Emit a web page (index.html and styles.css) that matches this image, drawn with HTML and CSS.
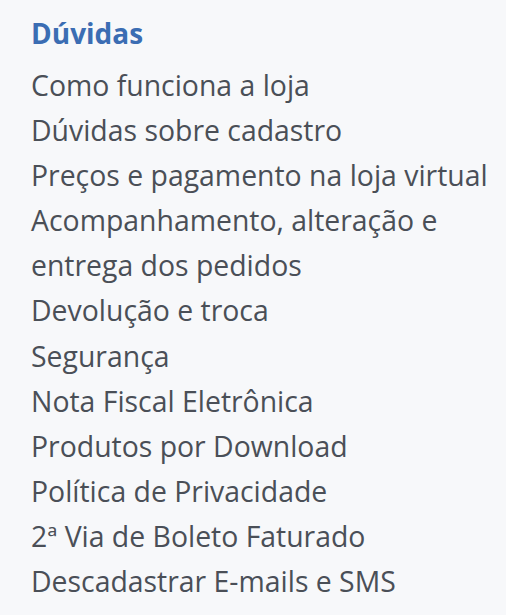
FILE: index.html
```html
<!DOCTYPE html>
<html lang="pt-BR">
<head>
<meta charset="utf-8">
<link rel="stylesheet" href="styles.css">
</head>
<body>
<nav class="faq">
  <h2 class="faq-title">Dúvidas</h2>
  <ul class="faq-list">
    <li><a href="#">Como funciona a loja</a></li>
    <li><a href="#">Dúvidas sobre cadastro</a></li>
    <li><a href="#">Preços e pagamento na loja virtual</a></li>
    <li><a href="#">Acompanhamento, alteração e entrega dos pedidos</a></li>
    <li><a href="#">Devolução e troca</a></li>
    <li><a href="#">Segurança</a></li>
    <li><a href="#">Nota Fiscal Eletrônica</a></li>
    <li><a href="#">Produtos por Download</a></li>
    <li><a href="#">Política de Privacidade</a></li>
    <li><a href="#">2ª Via de Boleto Faturado</a></li>
    <li><a href="#">Descadastrar E-mails e SMS</a></li>
  </ul>
</nav>
</body>
</html>
```
FILE: styles.css
```css
html, body {
  margin: 0;
  padding: 0;
  background: #f7f8fa;
}
body {
  font-family: "Open Sans", "Noto Sans", sans-serif;
}
.faq {
  padding: 14px 10px 0 31px;
}
.faq-title {
  margin: 0 0 11px;
  font-size: 28px;
  line-height: 38px;
  font-weight: 700;
  color: #3b6db3;
}
.faq-list {
  list-style: none;
  margin: 0;
  padding: 0;
}
.faq-list li {
  font-size: 28.4px;
  line-height: 45.1px;
}
.faq-list a {
  color: #4a4f57;
  text-decoration: none;
}
```
